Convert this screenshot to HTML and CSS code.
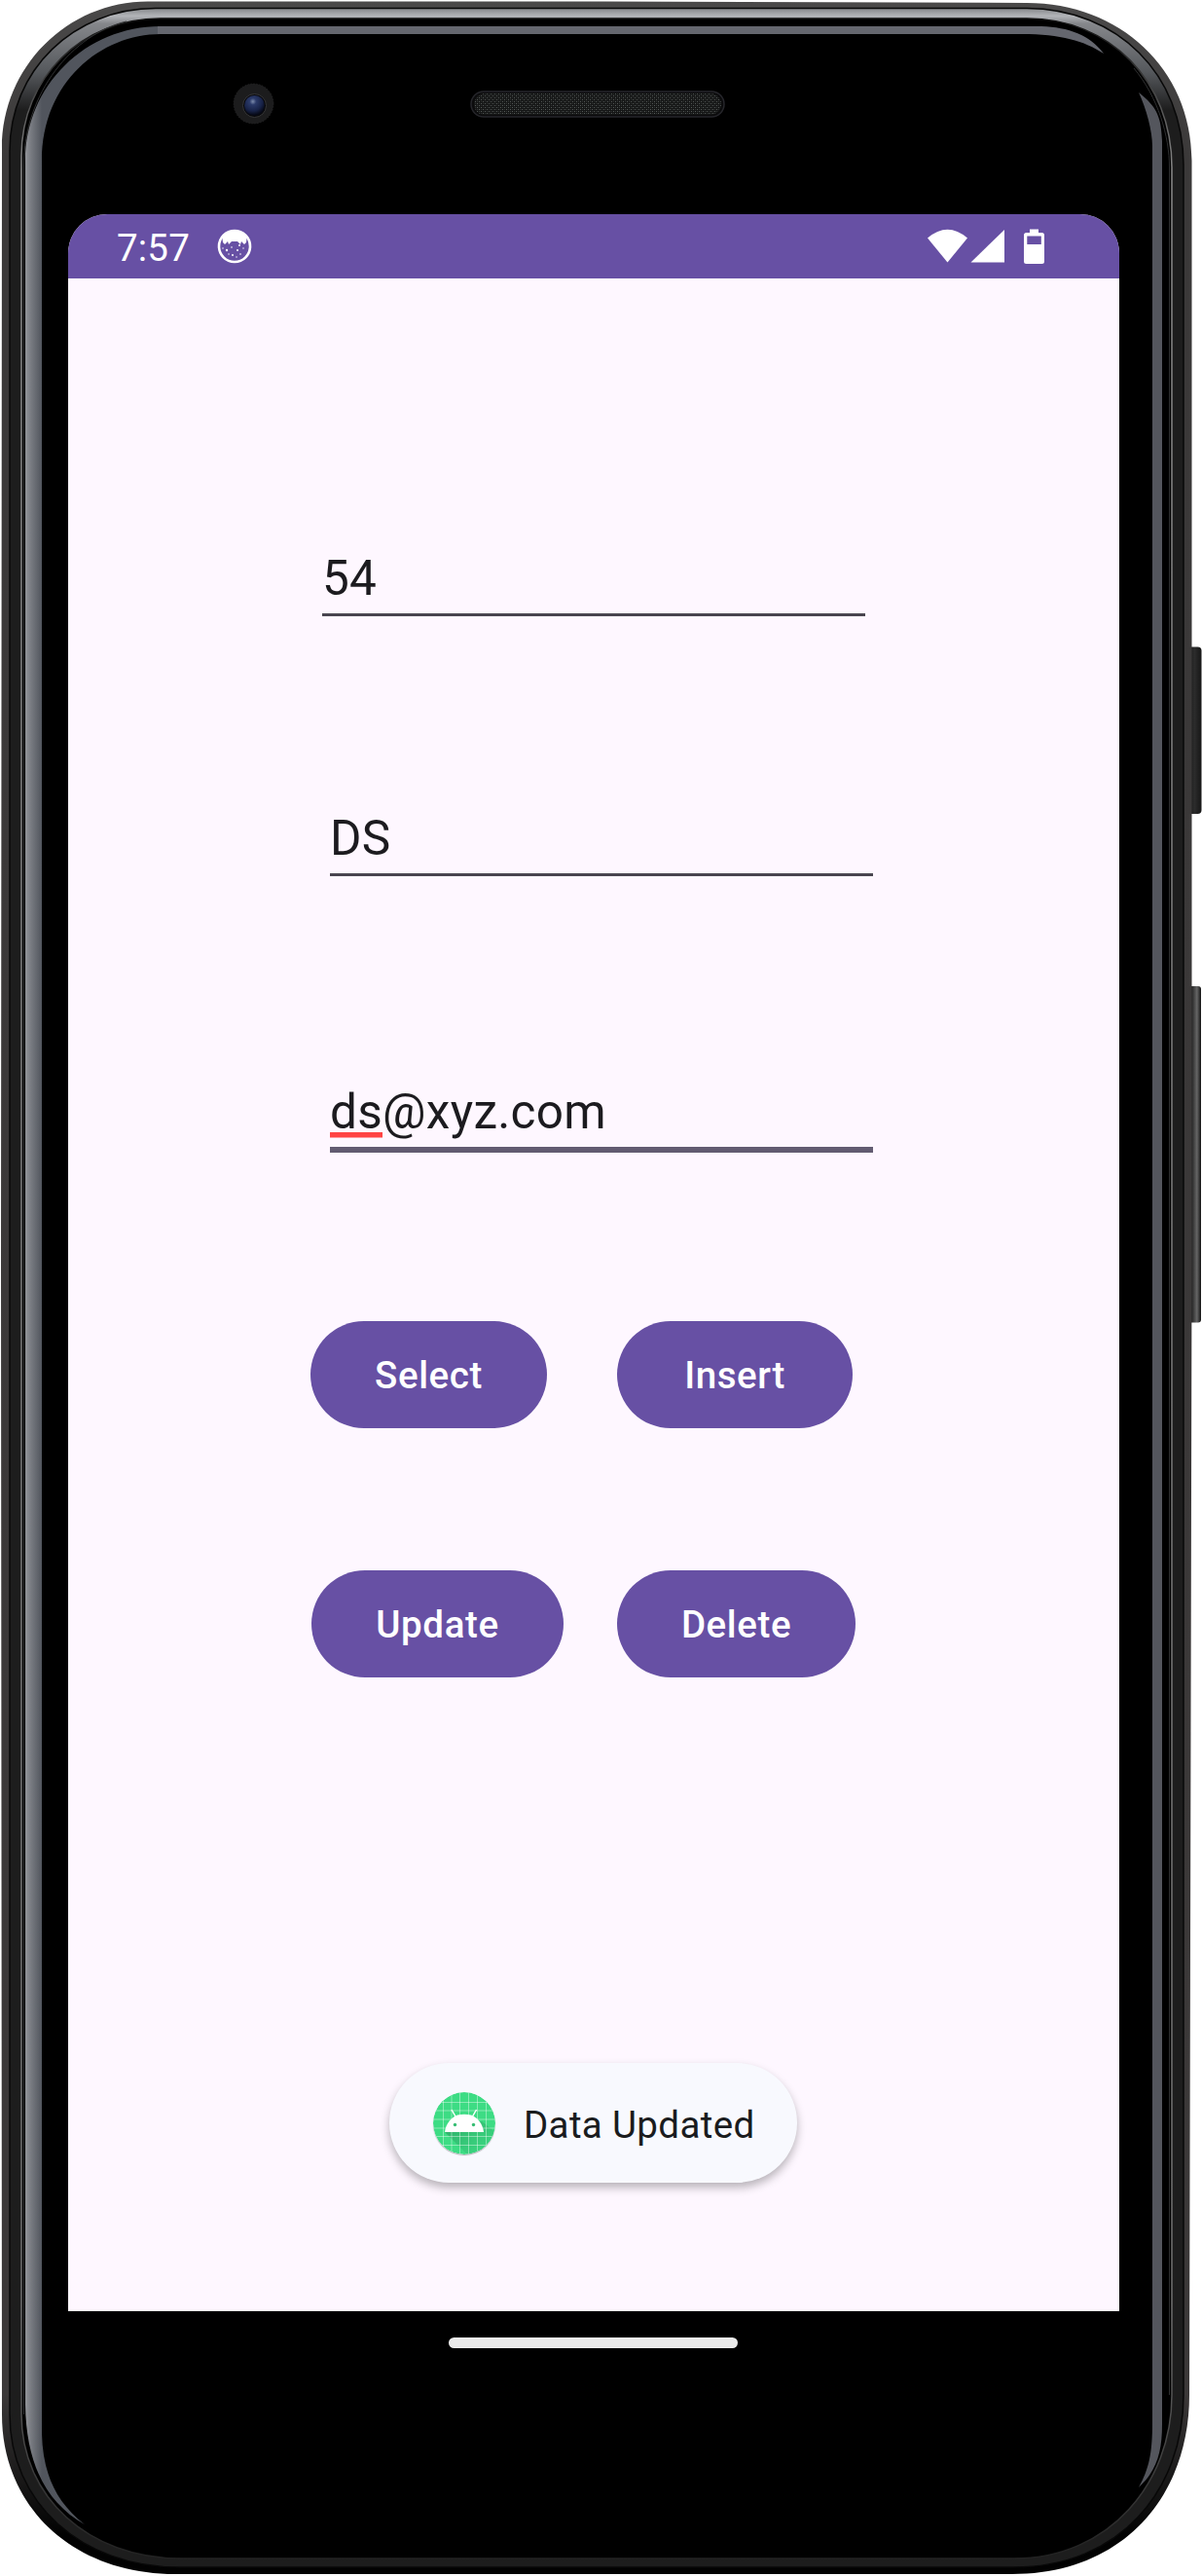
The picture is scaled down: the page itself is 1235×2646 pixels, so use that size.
FILE: index.html
```html
<!DOCTYPE html>
<html lang="en">
<head>
<meta charset="utf-8">
<title>Data form</title>
<link rel="stylesheet" href="styles.css">
</head>
<body>
<main class="device">
  <svg class="frame" viewBox="0 0 1235 2646" aria-hidden="true">
    <defs>
      <linearGradient id="rim" x1="0" y1="0" x2="0" y2="1">
        <stop offset="0" stop-color="#4a4949"/><stop offset=".06" stop-color="#3b3939"/><stop offset=".93" stop-color="#3b3838"/><stop offset=".96" stop-color="#1c1b1b"/><stop offset=".985" stop-color="#020202"/>
      </linearGradient>
      <linearGradient id="shine" x1="0" y1="0" x2="0" y2="1">
        <stop offset="0" stop-color="#85878a"/><stop offset=".003" stop-color="#b2b4b8"/><stop offset=".006" stop-color="#85878b"/><stop offset=".025" stop-color="#55585c"/><stop offset=".04" stop-color="#1d1d1d"/><stop offset="1" stop-color="#1d1d1d"/>
      </linearGradient>
      <linearGradient id="hair" x1="0" y1="0" x2="0" y2="1">
        <stop offset="0" stop-color="#111"/><stop offset=".02" stop-color="#333"/><stop offset=".06" stop-color="#8a8a8a"/><stop offset=".9" stop-color="#707070"/><stop offset="1" stop-color="#222"/>
      </linearGradient>
      <linearGradient id="glint" gradientUnits="userSpaceOnUse" x1="26" y1="0" x2="43" y2="0">
        <stop offset="0" stop-color="#93959a"/><stop offset=".3" stop-color="#7b7e84"/><stop offset="1" stop-color="#51555d"/>
      </linearGradient>
      <linearGradient id="keyTop" x1="0" y1="0" x2="1" y2="0">
        <stop offset="0" stop-color="#111"/><stop offset=".5" stop-color="#2c2c2c"/><stop offset="1" stop-color="#161616"/>
      </linearGradient>
      <linearGradient id="keyLow" x1="0" y1="0" x2="1" y2="0">
        <stop offset="0" stop-color="#0c0c0c"/><stop offset=".3" stop-color="#222"/><stop offset=".7" stop-color="#666"/><stop offset="1" stop-color="#111"/>
      </linearGradient>
      <radialGradient id="lens" cx=".42" cy=".3" r=".65">
        <stop offset="0" stop-color="#7c8bab"/><stop offset=".25" stop-color="#2b3a69"/><stop offset=".7" stop-color="#182348"/><stop offset="1" stop-color="#070a18"/>
      </radialGradient>
      <pattern id="mesh" width="4" height="4" patternUnits="userSpaceOnUse">
        <rect width="4" height="4" fill="#151616"/><path d="M0 0h1v1H0zM2 2h1v1H2z" fill="#555a58"/><path d="M2 0h1v1H2zM0 2h1v1H0z" fill="#303332"/>
      </pattern>
    </defs>
    <rect x="1220" y="664.500" width="14.500" height="171.500" rx="4" fill="url(#keyTop)"/>
    <rect x="1220" y="1013" width="14" height="345.500" rx="3" fill="url(#keyLow)"/>
    <path fill="url(#rim)" d="M152 1.500H620L1055 3C1150 3 1224 70 1224.500 165V1300L1222 2460C1222 2562 1156 2644 1040 2644H180C75 2644 2 2575 2 2480L1 1300L2 152C2 69 69 1.500 152 1.500Z"/>
    <path fill="url(#shine)" stroke="#080808" stroke-width="1.500" d="M160 8.500H1055C1148 9 1216 76 1216 170V2460C1216 2558 1150 2637 1042 2637H184C83 2637 10 2570 10 2480V155C10 72 76 8.500 160 8.500Z"/>
    <path fill="#000" stroke="url(#hair)" stroke-width="1.500" d="M165 19H1055C1140 19 1204 83 1204 172V2460C1204 2550 1140 2628 1042 2628H186C90 2628 22 2564 22 2480V160C22 80 84 19 165 19Z"/>
    <path fill="none" stroke="#303132" stroke-width="1" d="M24.500 2480V170C24.500 95 75 35 130 22M1201.500 2460V172C1201.500 140 1190 100 1165 70"/>
    <path fill="url(#glint)" d="M26 2470V165C26 88 88 27 165 27V35C104 35 43 84 43 165V2500C44 2540 57 2570 87 2593C48 2571 27 2532 26 2470Z"/>
    <path fill="#65676f" d="M162 27H1070C1098 28 1120 36 1134 55C1114 42 1090 35 1050 35H162Z"/>
    <path fill="#54565d" d="M1170 95C1189 110 1193 120 1194 145V2490C1194 2520 1188 2538 1170 2555C1179 2538 1184 2525 1184 2490V150C1184 135 1178 112 1170 95Z"/>
    <circle cx="260.500" cy="106.500" r="20.500" fill="#1c1c1d" stroke="#29292a" stroke-width="1" stroke-dasharray="1 2"/>
    <circle cx="261.500" cy="108.500" r="12" fill="#080809" stroke="#363638"/>
    <circle cx="261.500" cy="108.500" r="10.500" fill="url(#lens)"/>
    <rect x="484" y="94" width="260" height="26" rx="13" fill="#0b0b0c" stroke="#26262b" stroke-width="1.500"/>
    <rect x="487" y="96" width="254" height="22" rx="11" fill="url(#mesh)"/>
  </svg>

  <section class="screen">
    <header class="status">
      <time class="clock">7:57</time>
      <svg class="debug" viewBox="0 0 36 36">
        <circle cx="18" cy="18" r="16" fill="none" stroke="#fff" stroke-width="2.600"/>
        <path fill="#fff" d="M5 7Q18-3 31 7L30 14L28 16L25 13L24 16L21 13H15L12 16L11 13L8 16L6 14Z"/>
        <g fill="#fff"><circle cx="10" cy="22" r="1.200"/><circle cx="15" cy="19" r=".8"/><circle cx="21" cy="22" r="1"/><circle cx="23" cy="17" r="1"/><circle cx="27" cy="20" r=".7"/><circle cx="16" cy="27" r="1"/><circle cx="24" cy="26" r=".8"/><circle cx="6" cy="20" r=".7"/><circle cx="20" cy="29" r=".7"/><circle cx="12" cy="26" r=".7"/></g>
      </svg>
      <svg class="system" viewBox="0 0 122 36">
        <g fill="#fff"><path d="M1 9.500Q21.500-8 42 9.500L21.500 34.500Z"/><path d="M45.500 34.500L80 1V34.500Z"/><path fill-rule="evenodd" d="M106 .5h9v3.500h3.500q2.500 0 2.500 2.500v27q0 2.500-2.500 2.500h-16q-2.500 0-2.500-2.500V6.500q0-2.500 2.500-2.500h3.500zM103.300 7.500v8.500h14.500V7.500z"/></g>
      </svg>
    </header>

    <div class="content">
      <div class="field field-id"><span>54</span></div>
      <div class="field field-name"><span>DS</span></div>
      <div class="field field-email focused"><span><span class="misspelt">ds</span>@xyz.com</span></div>
      <div class="actions actions-first">
        <button class="btn select">Select</button>
        <button class="btn insert">Insert</button>
      </div>
      <div class="actions actions-second">
        <button class="btn update">Update</button>
        <button class="btn delete">Delete</button>
      </div>
      <div class="toast" role="status">
        <svg class="app-icon" viewBox="0 0 64 64">
          <defs><clipPath id="disc"><circle cx="32" cy="32" r="32"/></clipPath>
          <linearGradient id="cast" x1="0" y1="0" x2="1" y2="1"><stop offset="0" stop-color="#2ca765"/><stop offset="1" stop-color="#3ddc84" stop-opacity=".6"/></linearGradient></defs>
          <g clip-path="url(#disc)">
            <path fill="#3ddc84" d="M0 0h64v64H0z"/>
            <path fill="url(#cast)" d="M12 41L36 65H64V41L50 30Z"/>
            <path fill="none" stroke="#fff" stroke-opacity=".4" d="M10.500 0v64M19 0v64M27.500 0v64M36.500 0v64M45.500 0v64M54.500 0v64M0 10.500h64M0 19h64M0 28h64M0 37h64M0 45.500h64M0 54.500h64"/>
          </g>
          <path fill="#fff" d="M12 41C13 32 19 26 25 23.500Q32 22 39 23.500C46 26 51 33 52 41Z"/>
          <path stroke="#fff" stroke-width="1.500" d="M19 18l4 7M44.500 18l-4 7"/>
          <g fill="#35bc72"><circle cx="22.500" cy="33.500" r="1.700"/><circle cx="41.500" cy="33.500" r="1.700"/></g>
        </svg>
        <span class="toast-text">Data Updated</span>
      </div>
    </div>
  </section>
  <div class="home-bar"></div>
</main>
</body>
</html>
```
FILE: styles.css
```css
* { box-sizing: border-box; }
body { margin: 0; background: #fff; font-family: Roboto, "Liberation Sans", sans-serif; }
.device {
  position: relative;
  width: 1235px;
  height: 2646px;
  padding: 220px 85px 0 70px;
  overflow: hidden;
}
.frame { position: absolute; inset: 0; width: 1235px; height: 2646px; }
.screen {
  position: relative;
  height: 2154px;
  background: #fef7ff;
  border-radius: 40px 40px 0 0;
  overflow: hidden;
}
.status {
  display: flex;
  align-items: flex-start;
  height: 66px;
  padding: 15px 76px 0 50px;
  background: #6750a4;
  color: #fff;
}
.clock { width: 103px; padding-top: 1px; font-size: 38.5px; line-height: 38px; letter-spacing: .2px; }
.debug { width: 36px; height: 36px; }
.system { width: 122px; height: 36px; margin-left: auto; }
.content { display: flex; flex-direction: column; align-items: flex-start; }
.field {
  width: 558px;
  margin-left: 269px;
  border-bottom: 3px solid #49454f;
  color: #1c1b1f;
  font-size: 49.5px;
  line-height: 58px;
  letter-spacing: .3px;
}
.field-id { margin: 277px 0 0 261px; height: 70px; padding-top: 2px; }
.field-name { margin-top: 197px; height: 70px; padding-top: 2px; }
.field-email { margin-top: 207px; height: 77px; padding-top: 6px; }
.focused { border-bottom: 6px solid #625b71; }
.misspelt {
  background: linear-gradient(#ff4444, #ff4444) 0 calc(100% - 3px) / 100% 5.5px no-repeat;
}
.actions { display: flex; }
.actions-first { margin: 173px 0 0 249px; gap: 72px; }
.actions-second { margin: 146px 0 0 250px; gap: 55px; }
.btn {
  height: 110px;
  padding: 2px 0 0;
  border: 0;
  border-radius: 55px;
  background: #6750a4;
  color: #fff;
  font: 500 38.5px/108px Roboto, "Liberation Sans", sans-serif;
  letter-spacing: .6px;
}
.select { width: 243px; }
.insert { width: 242px; }
.update { width: 259px; }
.delete { width: 245px; }
.toast {
  display: flex;
  align-items: center;
  gap: 29px;
  width: 419px;
  height: 123px;
  margin: 396px 0 0 330px;
  padding-left: 45px;
  border-radius: 62px;
  background: #f8f9fe;
  box-shadow: 0 5px 10px rgba(0, 0, 0, .28);
  color: #1a1c1e;
  font-size: 38.5px;
  letter-spacing: .35px;
}
.toast-text { padding-top: 3px; }
.app-icon { width: 64px; height: 64px; border-radius: 50%; box-shadow: 0 1px 1px rgba(0, 0, 0, .3); }
.home-bar {
  position: relative;
  width: 297px;
  height: 11px;
  margin: 27px 0 0 391px;
  border-radius: 6px;
  background: #ebebeb;
}
```
